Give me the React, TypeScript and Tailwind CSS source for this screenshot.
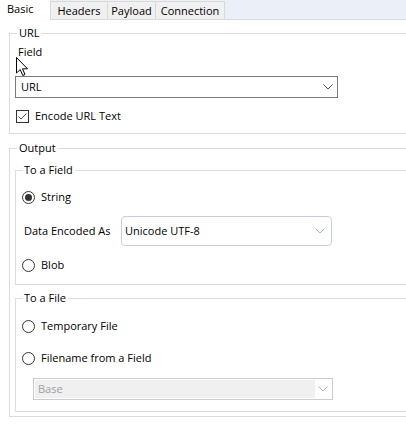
import React from "react";

function Chevron({ color = "#555" }: { color?: string }) {
  return (
    <svg width="10" height="6" viewBox="0 0 10 6" className="block">
      <path d="M0.5 0.5 L5 5 L9.5 0.5" fill="none" stroke={color} strokeWidth="1" />
    </svg>
  );
}

function Radio({ checked = false }: { checked?: boolean }) {
  return (
    <span className="w-[13px] h-[13px] rounded-full border border-[#333] flex items-center justify-center bg-white shrink-0">
      {checked && <span className="w-[7px] h-[7px] rounded-full bg-[#333]" />}
    </span>
  );
}

export default function App() {
  return (
    <div className="relative w-[406px] h-[426px] overflow-hidden bg-white text-[11px] leading-[16px] text-black font-['Open_Sans','Noto_Sans',sans-serif]">
      {/* Tabs */}
      <div className="flex h-[20px] bg-[#eaeff8]">
        <div className="w-[50px] bg-white pl-[7px] pt-[1px]">Basic</div>
        <div className="flex flex-1 border-b border-[#d9d9d9] items-end">
          <div className="w-[57px] h-[18px] bg-[#f0f0f0] border-l border-t border-[#d9d9d9] flex items-center justify-center">Headers</div>
          <div className="w-[48px] h-[18px] bg-[#f0f0f0] border-l border-t border-[#d9d9d9] flex items-center justify-center">Payload</div>
          <div className="w-[70px] h-[18px] bg-[#f0f0f0] border-l border-r border-t border-[#d9d9d9] flex items-center justify-center">Connection</div>
        </div>
      </div>

      {/* URL group */}
      <fieldset className="mt-[5px] ml-[9px] w-[405px] border border-[#dcdcdc] px-0 pb-[9px]">
        <legend className="ml-[7px] px-[2px] leading-[16px]">URL</legend>
        <div className="pt-[3px] pl-[8px]">Field</div>
        <div className="mt-[16px] ml-[5px] w-[323px] h-[22px] border border-[#7a7a7a] flex items-center justify-between pl-[5px] pr-[4px]">
          <span>URL</span>
          <Chevron color="#505050" />
        </div>
        <div className="mt-[10px] ml-[6px] flex items-center gap-[6px] h-[16px]">
          <span className="w-[13px] h-[13px] border border-[#333] flex items-center justify-center">
            <svg width="11" height="11" viewBox="0 0 11 11">
              <path d="M1.5 5.5 L4 8 L9.5 2.5" fill="none" stroke="#555" strokeWidth="1" />
            </svg>
          </span>
          <span>Encode URL Text</span>
        </div>
      </fieldset>

      {/* Output group */}
      <fieldset className="mt-[6px] ml-[9px] w-[405px] border border-[#dcdcdc] pb-[4px]">
        <legend className="ml-[7px] px-[2px] leading-[16px]">Output</legend>

        <fieldset className="mt-[6px] ml-[5px] w-[400px] border border-[#dcdcdc] pb-[11px]">
          <legend className="ml-[6px] px-[2px] leading-[16px]">To a Field</legend>
          <div className="mt-[11px] ml-[6px] flex items-center gap-[6px] h-[16px]">
            <Radio checked />
            <span>String</span>
          </div>
          <div className="mt-[11px] flex items-center h-[30px]">
            <span className="ml-[8px] w-[97px]">Data Encoded As</span>
            <div className="w-[211px] h-[30px] border border-[#c4cee0] rounded-[4px] flex items-center justify-between pl-[3px] pr-[6px]">
              <span>Unicode UTF-8</span>
              <Chevron color="#a7b0bf" />
            </div>
          </div>
          <div className="mt-[11px] ml-[6px] flex items-center gap-[6px] h-[16px]">
            <Radio />
            <span>Blob</span>
          </div>
        </fieldset>

        <fieldset className="mt-[5px] ml-[5px] w-[400px] border border-[#dcdcdc] pb-[11px]">
          <legend className="ml-[6px] px-[2px] leading-[16px]">To a File</legend>
          <div className="mt-[12px] ml-[6px] flex items-center gap-[6px] h-[16px]">
            <Radio />
            <span>Temporary File</span>
          </div>
          <div className="mt-[16px] ml-[6px] flex items-center gap-[6px] h-[16px]">
            <Radio />
            <span>Filename from a Field</span>
          </div>
          <div className="mt-[12px] ml-[17px] w-[300px] h-[22px] border border-[#cccccc] p-[1px] flex">
            <div className="w-[280px] bg-[#f0f0f0] flex items-center pl-[3px] text-[#a0a0a0]">Base</div>
            <div className="flex-1 flex items-center justify-center">
              <Chevron color="#b4b4b4" />
            </div>
          </div>
        </fieldset>
      </fieldset>

      {/* Mouse cursor */}
      <svg className="absolute left-[16px] top-[57px]" width="13" height="20" viewBox="0 0 13 20">
        <path d="M0.5 0.5 L0.5 16 L4.2 12.6 L6.8 18.5 L9 17.5 L6.5 11.8 L11.5 11.8 Z" fill="#fff" stroke="#000" strokeWidth="1" strokeLinejoin="round" />
      </svg>
    </div>
  );
}
